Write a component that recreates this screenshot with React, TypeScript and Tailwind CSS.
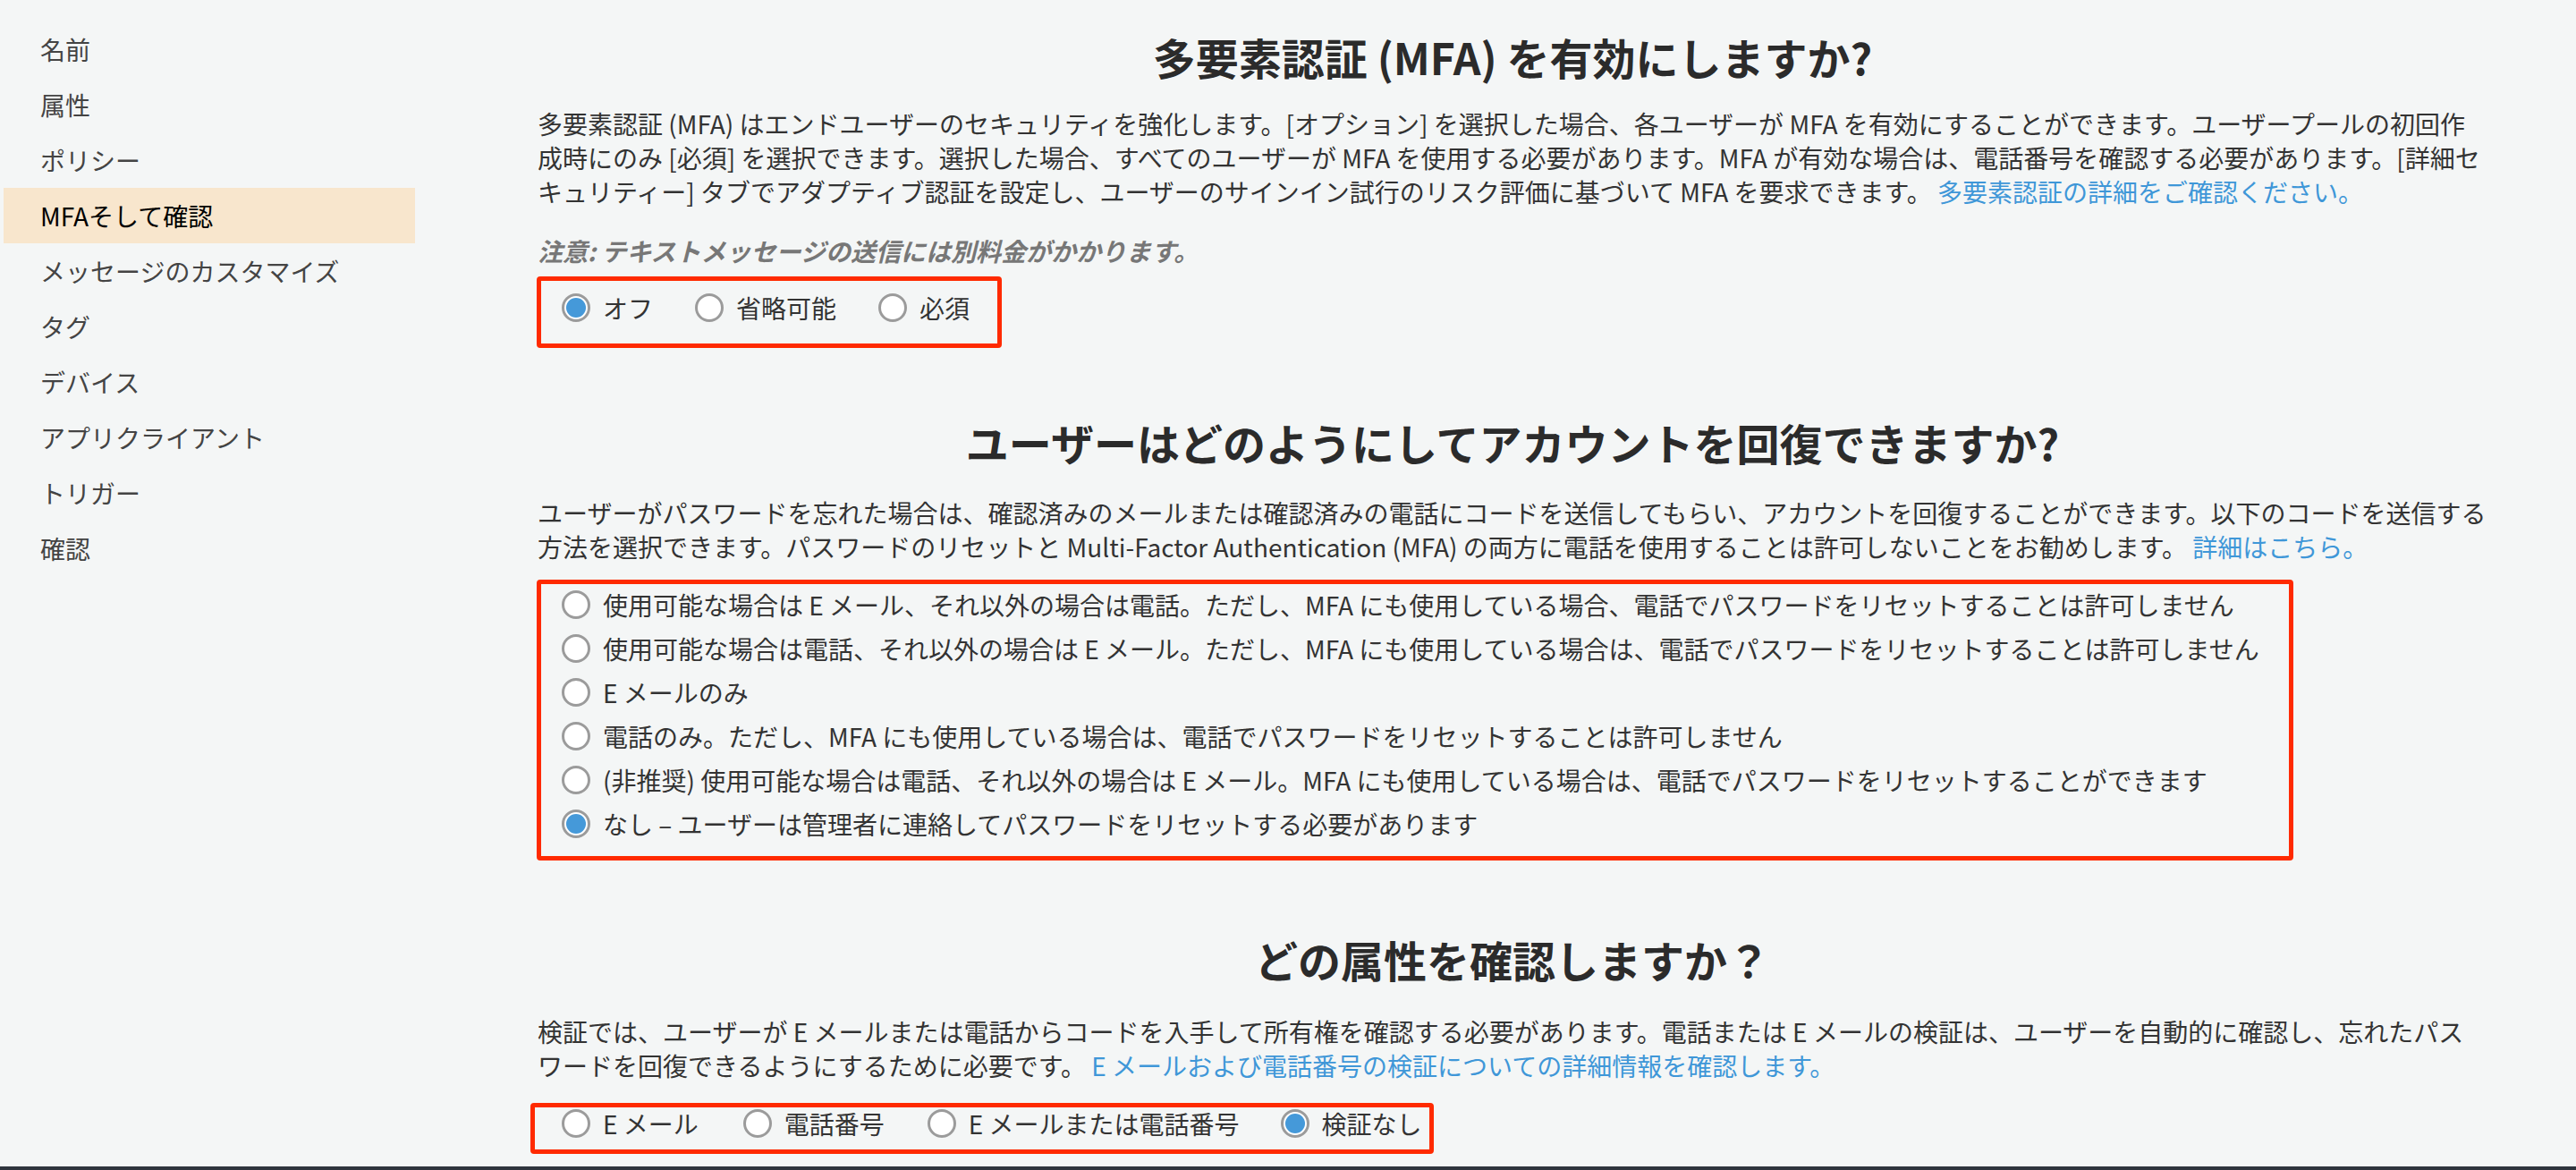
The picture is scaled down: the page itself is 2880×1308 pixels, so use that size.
import React from "react";

const FONT = { fontFamily: '"Noto Sans CJK JP", "Noto Sans", sans-serif' };

function Radio({ checked }: { checked?: boolean }) {
  return (
    <span className="w-[32px] h-[32px] shrink-0 rounded-full border-[3px] border-[#9b9b9b] bg-white flex items-center justify-center">
      {checked ? <span className="w-[22px] h-[22px] rounded-full bg-[#4599d9]" /> : null}
    </span>
  );
}

function Option({ label, checked, className }: { label: string; checked?: boolean; className?: string }) {
  return (
    <label className={"flex items-center gap-[14px] whitespace-nowrap " + (className ?? "")}>
      <Radio checked={checked} />
      <span>{label}</span>
    </label>
  );
}

const navItems = [
  "名前",
  "属性",
  "ポリシー",
  "MFAそして確認",
  "メッセージのカスタマイズ",
  "タグ",
  "デバイス",
  "アプリクライアント",
  "トリガー",
  "確認",
];

function Title({ children, className }: { children: React.ReactNode; className?: string }) {
  return (
    <h2 className={"text-center text-[48px] font-bold leading-[58px] text-[#2b2b2b] " + (className ?? "")}>
      {children}
    </h2>
  );
}

export default function App() {
  return (
    <div style={FONT} className="h-[1308px] w-[2880px] overflow-hidden bg-[#f4f6f6] flex flex-col text-[#333]">
      <div className="flex flex-1">
        <nav className="w-[464px] pl-[4px] pt-[24px] shrink-0">
          <ul className="flex flex-col">
            {navItems.map((n, i) => (
              <li
                key={n}
                className={
                  "h-[62px] w-[460px] pl-[41px] flex items-center text-[28px] " +
                  (i === 3 ? "bg-[#f8e6cd] text-black" : "text-[#444]")
                }
              >
                {n}
              </li>
            ))}
          </ul>
        </nav>

        <main className="ml-[137px] w-[2180px] pt-[34px] text-[28px] leading-[38px]">
          {/* Section 1 */}
          <Title>多要素認証 (MFA) を有効にしますか?</Title>
          <p className="mt-[27px] whitespace-nowrap text-[#333]">
            多要素認証 (MFA) はエンドユーザーのセキュリティを強化します。[オプション] を選択した場合、各ユーザーが MFA を有効にすることができます。ユーザープールの初回作
            <br />
            成時にのみ [必須] を選択できます。選択した場合、すべてのユーザーが MFA を使用する必要があります。MFA が有効な場合は、電話番号を確認する必要があります。[詳細セ
            <br />
            キュリティー] タブでアダプティブ認証を設定し、ユーザーのサインイン試行のリスク評価に基づいて MFA を要求できます。{" "}
            <a className="text-[#3f97d8]">多要素認証の詳細をご確認ください。</a>
          </p>
          <p className="mt-[28px] italic font-bold text-[#777]">注意: テキストメッセージの送信には別料金がかかります。</p>
          <div className="mt-[10px] -ml-px w-[520px] h-[80px] border-[5px] border-[#ff2a00] rounded-[4px] pl-[23px] pt-[11px]">
            <div className="flex h-[38px] items-center">
              <Option label="オフ" checked className="mr-[47px]" />
              <Option label="省略可能" className="mr-[47px]" />
              <Option label="必須" />
            </div>
          </div>

          {/* Section 2 */}
          <Title className="mt-[76px]">ユーザーはどのようにしてアカウントを回復できますか?</Title>
          <p className="mt-[31px] whitespace-nowrap">
            ユーザーがパスワードを忘れた場合は、確認済みのメールまたは確認済みの電話にコードを送信してもらい、アカウントを回復することができます。以下のコードを送信する
            <br />
            方法を選択できます。パスワードのリセットと Multi-Factor Authentication (MFA) の両方に電話を使用することは許可しないことをお勧めします。{" "}
            <a className="text-[#3f97d8]">詳細はこちら。</a>
          </p>
          <div className="mt-[18px] -ml-px w-[1964px] h-[314px] border-[5px] border-[#ff2a00] rounded-[4px] pl-[23px] pt-[3px]">
            <div className="flex flex-col gap-[9px]">
              {[
                "使用可能な場合は E メール、それ以外の場合は電話。ただし、MFA にも使用している場合、電話でパスワードをリセットすることは許可しません",
                "使用可能な場合は電話、それ以外の場合は E メール。ただし、MFA にも使用している場合は、電話でパスワードをリセットすることは許可しません",
                "E メールのみ",
                "電話のみ。ただし、MFA にも使用している場合は、電話でパスワードをリセットすることは許可しません",
                "(非推奨) 使用可能な場合は電話、それ以外の場合は E メール。MFA にも使用している場合は、電話でパスワードをリセットすることができます",
                "なし – ユーザーは管理者に連絡してパスワードをリセットする必要があります",
              ].map((t, i) => (
                <div key={i} className="h-[40px] flex items-center">
                  <Option label={t} checked={i === 5} />
                </div>
              ))}
            </div>
          </div>

          {/* Section 3 */}
          <Title className="mt-[81px]">どの属性を確認しますか？</Title>
          <p className="mt-[33px] whitespace-nowrap">
            検証では、ユーザーが E メールまたは電話からコードを入手して所有権を確認する必要があります。電話または E メールの検証は、ユーザーを自動的に確認し、忘れたパス
            <br />
            ワードを回復できるようにするために必要です。{" "}
            <a className="text-[#3f97d8]">E メールおよび電話番号の検証についての詳細情報を確認します。</a>
          </p>
          <div className="mt-[23px] -ml-[8px] w-[1010px] h-[57px] border-[5px] border-[#ff2a00] rounded-[4px] pl-[30px]">
            <div className="flex h-[36px] items-center">
              <Option label="E メール" className="mr-[50px]" />
              <Option label="電話番号" className="mr-[48px]" />
              <Option label="E メールまたは電話番号" className="mr-[46px]" />
              <Option label="検証なし" checked />
            </div>
          </div>
        </main>
      </div>
      <div className="h-[4px] bg-[#2e343d] shrink-0" />
    </div>
  );
}
